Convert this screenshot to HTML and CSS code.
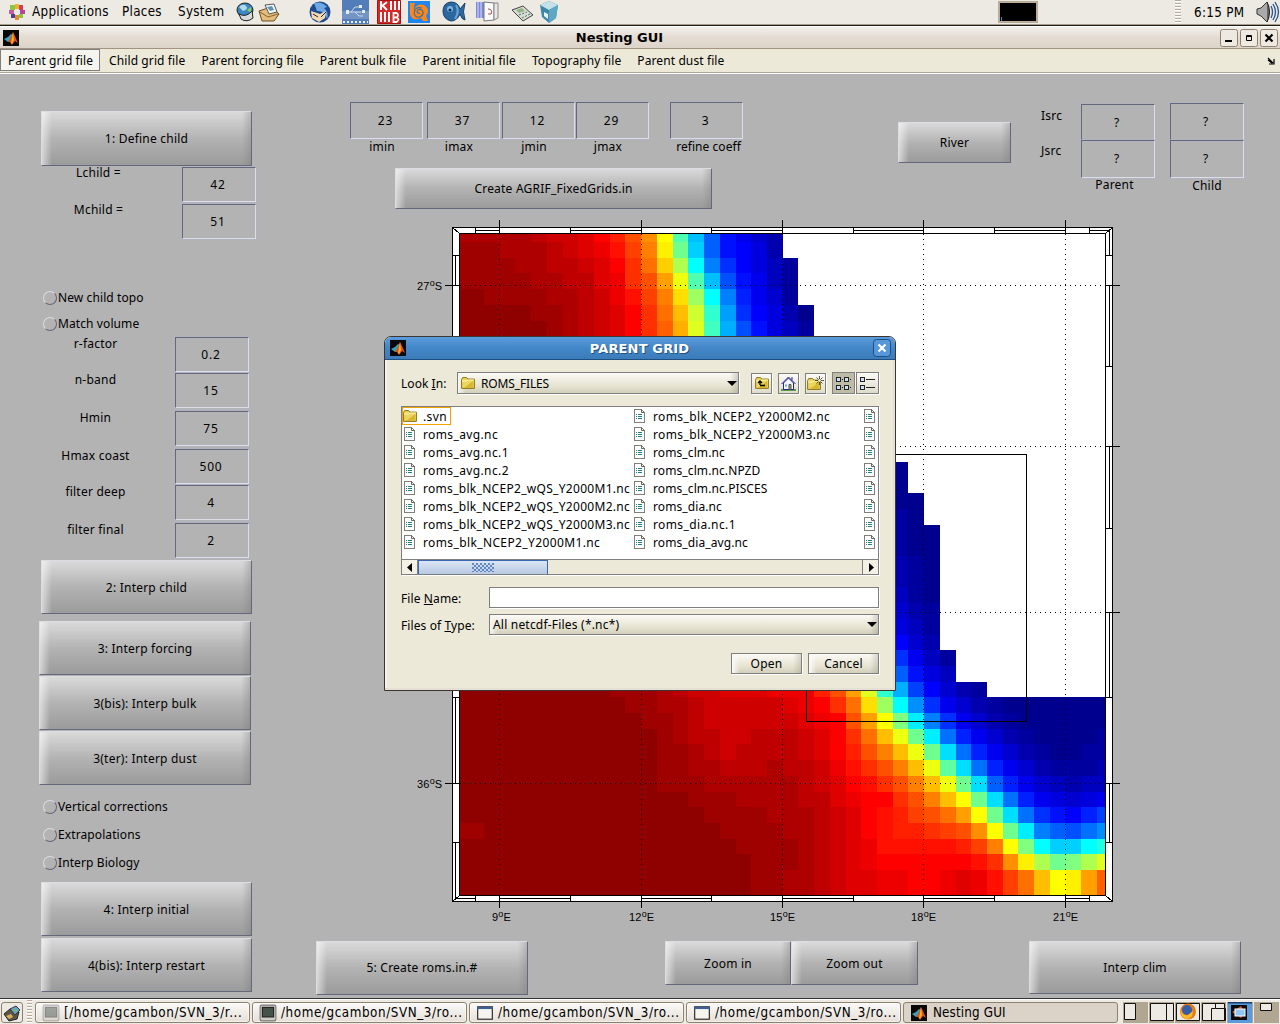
FILE: index.html
```html
<!DOCTYPE html>
<html lang="en">
<head>
<meta charset="utf-8">
<title>Nesting GUI</title>
<link rel="stylesheet" href="styles.css">
</head>
<body>
<svg width="0" height="0" class="defs">
  <defs>
    <symbol id="matlab" viewBox="0 0 16 16"><rect width="16" height="16" fill="#080808"/><path d="M1 9l4-2 3-3 2 1-3 6-2 1z" fill="#3f9fb5"/><path d="M5 12l3-5 2-5 2 4 3 7-3-2-3 4-2-3z" fill="#d9501c"/><path d="M8 13l2-11 1 8-2 4z" fill="#ffb020"/></symbol>
    <symbol id="file" viewBox="0 0 12 14"><g shape-rendering="crispEdges"><path d="M.5.5h7l3 3v10h-10z" fill="#fff" stroke="#808078"/><path d="M2 5.500h1M4 5.500h4M2 7.500h1M4 7.500h4M2 9.500h1M4 9.500h4" stroke="#267f80"/></g><path d="M7.500.5v3h3" fill="none" stroke="#665"/></symbol>
    <symbol id="folder" viewBox="0 0 14 12"><path d="M.6 2.500l1-1.900h4l1.300 1.500h6.500v9.300H.6z" fill="#ecd65e" stroke="#8a7318"/><path d="M1 4h5l1-1h6" stroke="#fff7b4" fill="none"/><path d="M3 11L12 4v7z" fill="#d8b832"/></symbol>
    <symbol id="term" viewBox="0 0 16 16"><rect x="1" y="1" width="14" height="14" rx="1.500" fill="#cfccc4" stroke="#777"/><rect x="3" y="3" width="10" height="8.500" fill="#45524a" stroke="#222"/></symbol>
    <symbol id="win" viewBox="0 0 16 16"><rect x="1.500" y="2.500" width="13" height="11" fill="#f6f4ef" stroke="#222"/><path d="M1 3.500h14" stroke="#3b5f96" stroke-width="2"/></symbol>
  </defs>
</svg>

<header class="panel">
  <svg class="foot" width="18" height="18" viewBox="0 0 18 18"><g stroke-width="4"><path d="M9 1v5" stroke="#e8b52c"/><path d="M9 12v5" stroke="#e38b2f"/><path d="M1 9h5" stroke="#c45aa4"/><path d="M12 9h5" stroke="#b4479b"/></g><g fill="#8cc63f"><path d="M2 2h5v5H2z"/><path d="M11 2h4v5h-4z" fill="#d73c5c"/><path d="M3 11h4v4H3z" fill="#4d3f8e"/><path d="M11 11h4v4h-4z"/></g></svg>
  <span class="m1">Applications</span><span class="m2">Places</span><span class="m3">System</span>
  <svg class="launchers" width="330" height="24" viewBox="0 0 330 24">
    <ellipse cx="10" cy="10" rx="8" ry="7" fill="#3c86c4" stroke="#222"/><path d="M4 7q4-4 7-1t-3 5z" fill="#b5d8f2"/><path d="M12 10l4-3v6z" fill="#8bd14e"/><path d="M4 14q7 4 13-3l1 7q-6 5-12 1z" fill="#d9d9dc" stroke="#222"/>
    <path d="M24 11l12-4 8 7-5 7H27z" fill="#e3bd7c" stroke="#6b4c1c"/><path d="M30 5l9-1 3 8-8 2z" fill="#f4f7f8" stroke="#555"/><path d="M32 7l5-1 2 4-4 1z" fill="#5c93b7"/><path d="M25 12l8 5 10-3" fill="none" stroke="#86632e"/>
    <circle cx="85" cy="12" r="10.500" fill="#1e4b8f"/><path d="M79 3q8-2 13 4l-3 1q5 4 3 11-3-9-10-8z" fill="#6fa8e4"/><path d="M76 11l9 3 6-3-1 7-6 4-7-4z" fill="#f2d9b1"/><path d="M78 14l5 3M91 12l-5 5" stroke="#27282c"/>
    <g transform="translate(107 0)"><path d="M0 0h27v24H0z" fill="#527db9"/><path d="M0 11h27v8H0z" fill="#7395c6"/><path d="M6 12h13M9 12l4-5h4M13 12l4 4h4" stroke="#c9d9ef" fill="none"/><path d="M4 10h3v4H4zM17 5h3v3h-3zM20 10h3v3h-3z" fill="#e3edf9"/><path d="M1 22h25" stroke="#eef4ff" stroke-width="2" stroke-dasharray="2 2"/></g>
    <g transform="translate(142 0)"><path d="M.5.5h23v23H.5z" fill="#d72727" stroke="#a11"/><path d="M4 1v9M5 6l5-4M5 5l5 5M4 12v10M8 12v10M12 12v10M14 1v9M18 1v9M22 1v9" stroke="#fff" stroke-width="2" fill="none"/><path d="M16.500 13h3q3 2 0 4.500 4 1.500 0 4.500h-3zM16.500 17.500h3" stroke="#fff" fill="none" stroke-width="1.800"/></g>
    <g transform="translate(173 1)"><path d="M0 0h22v22H0z" fill="#1f86ee"/><path d="M2 2h5q-2 5-1 7Q9 2 16 4q7 4 2 11l2 5h-5l-2-3Q4 21 2 13z" fill="#ff8617"/><path d="M14 7q-7-2-8 5 1 5 6 4 5-3 2-7-4-2-5 2 1 2 3 1" stroke="#3a6ea8" fill="none" stroke-width="1.200"/></g>
    <path d="M208 11q0-8 8-9 7 0 9 7l5-6q-3 9 0 17-3 0-5-6-3 7-9 7-8-2-8-10z" fill="#2c679f" stroke="#173f68"/><path d="M221 5q4 6-1 14" stroke="#6aa5d7" fill="none" stroke-width="2"/><circle cx="215" cy="9" r="3" fill="#79b9e5"/><circle cx="215" cy="10" r="1.500" fill="#102e58"/>
    <g transform="translate(241 1)"><path d="M0 1h9v16H0z" fill="#7b88d6"/><path d="M2 1v16M5 1v16" stroke="#dce0ff"/><path d="M8 1l10 1v17l-10 1z" fill="#fafafa" stroke="#777"/><path d="M18 2h4v15l-4 2z" fill="#e8e8ea" stroke="#888"/><path d="M12 8q5 0 3 5h-3" stroke="#b44" fill="none"/></g>
    <path d="M277 10l11-4 10 9-10 6z" fill="#d6ded3" stroke="#444"/><path d="M281 10l6-2 3 3-6 2z" fill="#92b487"/><path d="M284 15l8-3M287 18l8-4" stroke="#566" stroke-dasharray="2 1.500"/>
    <path d="M305 5l9-4 9 4-2 13-7 5-7-6z" fill="#3d86a6"/><path d="M305 5l9-4 9 4-9 5z" fill="#c4e1ea"/><path d="M314 10v13l7-5 2-13z" fill="#5ea8c3"/><path d="M309 12l4 2v5l-4-3z" fill="#e6f3f7"/>
  </svg>
  <div class="cpu"></div><div class="grip"></div><span class="clock">6:15 PM</span>
  <svg class="vol" width="24" height="24" viewBox="0 0 24 24"><path d="M1 9l4-1 6-6q4 10 0 20l-6-6-4-2z" fill="#aaa" stroke="#333"/><path d="M11 2q5 10 0 20" fill="#666" stroke="#222"/><path d="M15 6q3 6 0 12M17 4q5 8 0 16M19 2q7 10 0 20" fill="none" stroke="#285391" stroke-width="1.300"/></svg>
</header>

<div class="titlebar">
  <svg width="16" height="16"><use href="#matlab"/></svg>
  <h1>Nesting GUI</h1>
  <div class="wbtns">
    <svg width="18" height="18"><rect x=".5" y=".5" width="17" height="17" rx="2" class="wb"/><path d="M5 12h7" stroke="#000" stroke-width="2"/></svg>
    <svg width="18" height="18"><rect x=".5" y=".5" width="17" height="17" rx="2" class="wb"/><path d="M6.500 6.500h5v5h-5zM6 7.500h6" fill="none" stroke="#000"/></svg>
    <svg width="18" height="18"><rect x=".5" y=".5" width="17" height="17" rx="2" class="wb"/><path d="M5.500 5.500l7 7m0-7l-7 7" stroke="#000" stroke-width="2.200"/></svg>
  </div>
</div>
<nav class="menubar">
  <span class="on">Parent grid file</span><span>Child grid file</span><span>Parent forcing file</span><span>Parent bulk file</span><span>Parent initial file</span><span>Topography file</span><span>Parent dust file</span>
  <svg width="8" height="8"><path d="M1 1l5 5M7 2v5H2M1 3l4 3" stroke="#000" fill="none" stroke-width="1.200"/></svg>
</nav>

<main class="figure">
  <section class="steps">
    <button class="btn s1">1: Define child</button>
    <div class="pair dims">
      <label>Lchild =</label><span class="box">42</span>
      <label>Mchild =</label><span class="box">51</span>
    </div>
    <label class="radio ra"><i></i>New child topo</label>
    <label class="radio rb"><i></i>Match volume</label>
    <div class="pair topo">
      <label>r-factor</label><span class="box">0.2</span>
      <label>n-band</label><span class="box">15</span>
      <label>Hmin</label><span class="box">75</span>
      <label>Hmax coast</label><span class="box">500</span>
      <label>filter deep</label><span class="box">4</span>
      <label>filter final</label><span class="box">2</span>
    </div>
    <button class="btn s2">2: Interp child</button>
    <button class="btn s3">3: Interp forcing</button>
    <button class="btn s3b">3(bis): Interp bulk</button>
    <button class="btn s3b">3(ter): Interp dust</button>
    <label class="radio rc"><i></i>Vertical corrections</label>
    <label class="radio rd"><i></i>Extrapolations</label>
    <label class="radio rd"><i></i>Interp Biology</label>
    <button class="btn s4">4: Interp initial</button>
    <button class="btn s4b">4(bis): Interp restart</button>
  </section>

  <section class="work">
    <div class="top">
      <div class="params">
        <div class="fields">
          <div class="f"><span class="box">23</span><label>imin</label></div>
          <div class="f f2"><span class="box">37</span><label>imax</label></div>
          <div class="f f3"><span class="box">12</span><label>jmin</label></div>
          <div class="f f4"><span class="box">29</span><label>jmax</label></div>
          <div class="f f5"><span class="box">3</span><label>refine coeff</label></div>
        </div>
        <button class="btn agrif">Create AGRIF_FixedGrids.in</button>
      </div>
      <button class="btn river">River</button>
      <div class="srclab"><label>Isrc</label><label>Jsrc</label></div>
      <div class="src sp"><span class="box">?</span><span class="box">?</span><label>Parent</label></div>
      <div class="src sc"><span class="box">?</span><span class="box">?</span><label>Child</label></div>
    </div>
    <svg class="plot" width="720" height="712" viewBox="410 216 720 712" shape-rendering="crispEdges">
      <rect x="452" y="227" width="660" height="674" fill="#fff"/>
      <g id="cells"></g>
      <g stroke="#000" stroke-dasharray="1 4" fill="none">
        <path d="M499.500 234v661M641.500 234v661M782.500 234v661M923.500 234v661M1065.500 234v661"/>
        <path d="M460 285.500h645M460 446.500h645M460 612.500h645M460 783.500h645"/>
      </g>
      <g stroke="#000" fill="none">
        <path d="M452.500 227.500h660v673.500h-660zM459.500 233.500h646v662h-646z"/>
        <path d="M806.500 454.500h220v267h-220z"/>
        <path d="M452.500 227.500l7 6M1112.500 227.500l-7 6M452.500 901.500l7-6M1112.500 901.500l-7-6"/>
        <path d="M475.500 230.500h24M570.500 230.500h71M711.500 230.500h71M853.500 230.500h70M994.500 230.500h71M1089.500 230.500h20M455.500 898.500h20M499.500 898.500h71M641.500 898.500h70M782.500 898.500h71M923.500 898.500h71M1065.500 898.500h24"/>
        <path d="M475.500 228v6M570.500 228v6M711.500 228v6M853.500 228v6M994.500 228v6M1089.500 228v6M475.500 895v6M570.500 895v6M711.500 895v6M853.500 895v6M994.500 895v6M1089.500 895v6"/>
        <path d="M455.500 255.500v30M455.500 697.500v86M455.500 842.500v56M1109.500 230.500v25M1109.500 285.500v81M1109.500 446.500v82M1109.500 612.500v85M1109.500 783.500v59"/>
        <path d="M453 255.500h7M453 697.500h7M453 842.500h7M1105 255.500h7M1105 366.500h7M1105 528.500h7M1105 697.500h7M1105 842.500h7"/>
        <path d="M499.500 220v14M641.500 220v14M782.500 220v14M923.500 220v14M1065.500 220v14M499.500 895v13M641.500 895v13M782.500 895v13M923.500 895v13M1065.500 895v13M445 285.500h15M445 783.500h15M1105 285.500h15M1105 446.500h15M1105 612.500h15M1105 783.500h15"/>
      </g>
      <g class="ax">
        <text x="417" y="290">27<tspan dy="-4" class="deg">o</tspan><tspan dy="4">S</tspan></text>
        <text x="417" y="788">36<tspan dy="-4" class="deg">o</tspan><tspan dy="4">S</tspan></text>
        <text x="492" y="921">9<tspan dy="-4" class="deg">o</tspan><tspan dy="4">E</tspan></text>
        <text x="629" y="921">12<tspan dy="-4" class="deg">o</tspan><tspan dy="4">E</tspan></text>
        <text x="770" y="921">15<tspan dy="-4" class="deg">o</tspan><tspan dy="4">E</tspan></text>
        <text x="911" y="921">18<tspan dy="-4" class="deg">o</tspan><tspan dy="4">E</tspan></text>
        <text x="1053" y="921">21<tspan dy="-4" class="deg">o</tspan><tspan dy="4">E</tspan></text>
      </g>
    </svg>
    <div class="bottom">
      <button class="btn create">5: Create roms.in.#</button>
      <button class="btn zi">Zoom in</button><button class="btn zo">Zoom out</button>
      <button class="btn clim">Interp clim</button>
    </div>
  </section>
</main>

<footer class="taskbar">
  <div class="desk"><svg width="18" height="18" viewBox="0 0 18 18"><path d="M1 10l6-5 9 3-2 7-8 2z" fill="#5c5647" stroke="#222"/><path d="M7 5l6-3 4 4-5 5z" fill="#6f9fc7" stroke="#333"/><path d="M3 12l5-2 2 3-4 2z" fill="#d6b45a"/><path d="M10 6l3-1 1 3z" fill="#78bf52"/></svg></div>
  <div class="grip g2"></div>
  <div class="task"><svg width="18" height="18" opacity=".5"><use href="#term"/></svg><span>[/home/gcambon/SVN_3/r...</span></div>
  <div class="task"><svg width="18" height="18"><use href="#term"/></svg><span>/home/gcambon/SVN_3/ro...</span></div>
  <div class="task"><svg width="18" height="18"><use href="#win"/></svg><span>/home/gcambon/SVN_3/ro...</span></div>
  <div class="task"><svg width="18" height="18"><use href="#win"/></svg><span>/home/gcambon/SVN_3/ro...</span></div>
  <div class="task active"><svg width="16" height="16"><use href="#matlab"/></svg><span>Nesting GUI</span></div>
  <svg class="pager" width="156" height="21" viewBox="0 0 156 21">
    <rect width="156" height="21" fill="#b0a692"/><g fill="#edeae3" stroke="#111"><path d="M1.500 1.500h11v16h-11zM27.500 1.500h23v17h-23zM43.500 1.500v17M53.500 1.500h23v17h-23zM79.500 1.500h22v17h-22zM92.500 1.500v5h10v12h-14v-12h4M137.500 1.500h11v7h-11z"/></g>
    <path d="M25.500 0v21M51.500 0v21M77.500 0v21M103.500 0v21M130.500 0v21" stroke="#edeae3"/>
    <circle cx="65" cy="9.500" r="8" fill="#e67a16"/><circle cx="64" cy="8" r="5" fill="#355ea7"/><path d="M58 7q1 7 7 6l5-4q0 8-7 8-6-2-5-10z" fill="#f6b92a"/>
    <rect x="105" width="24" height="21" fill="#5b99d8"/><path d="M105 .5h24" stroke="#183b74" stroke-width="2"/><rect x="108" y="3" width="16" height="15" fill="#0a0a0a"/><path d="M109 10l9-6 4 7-4 5z" fill="#c5532d"/><rect x="112" y="7" width="10" height="7" fill="#8fc5ee" stroke="#fff"/>
  </svg>
</footer>

<div class="dialog">
  <div class="dtitle"><svg width="16" height="16"><use href="#matlab"/></svg><h2>PARENT GRID</h2><svg width="18" height="18"><rect x=".5" y=".5" width="17" height="17" rx="3" fill="#5597d8" stroke="#1d4f83"/><path d="M5.500 5.500l7 7m0-7l-7 7" stroke="#fff" stroke-width="2.200"/></svg></div>
  <div class="dbody">
    <div class="look">
      <label>Look <u>I</u>n:</label>
      <div class="combo"><svg width="14" height="12"><use href="#folder"/></svg><span>ROMS_FILES</span><i></i></div>
      <div class="tool t1"><svg width="14" height="13" viewBox="0 0 14 13"><use href="#folder" width="14" height="12"/><path d="M5 8V4M3 6l2-2 2 2M5 8.500h5" stroke="#000" fill="none" stroke-width="1.300"/></svg></div>
      <div class="tool t2"><svg width="15" height="15" viewBox="0 0 15 15"><path d="M0 14h15" stroke="#5a9c43" stroke-width="2"/><path d="M2.500 7v6.500h10V7l-5-5z" fill="#f4f4ff" stroke="#24248c"/><path d="M.5 8l7-7 7 7M11 4V1" fill="none" stroke="#24248c"/><path d="M8 8.500h2v5H8z" fill="#b3a43a" stroke="#555"/><path d="M4 8.500h2v2H4z" fill="#5bb4d8"/></svg></div>
      <div class="tool t2"><svg width="17" height="15" viewBox="0 0 17 15"><use href="#folder" y="2" width="14" height="12"/><path d="M12.500 0v9M8 4.500h9M9.500 1.500l6 6m0-6l-6 6" stroke="#332" stroke-width=".8"/><circle cx="12.500" cy="4.500" r="1.300" fill="#ffe"/></svg></div>
      <div class="tool tog sel"><svg width="17" height="15" viewBox="0 0 17 15"><g fill="#cfe0f5" stroke="#222" shape-rendering="crispEdges"><path d="M1.500 1.500h4v4h-4zM9.500 1.500h4v4h-4zM1.500 9.500h4v4h-4zM9.500 9.500h4v4h-4zM7 3.500h1M15 3.500h1M7 11.500h1M15 11.500h1"/></g></svg></div>
      <div class="tool tog"><svg width="17" height="15" viewBox="0 0 17 15"><g fill="#cfe0f5" stroke="#222" shape-rendering="crispEdges"><path d="M1.500 1.500h4v4h-4zM1.500 9.500h4v4h-4zM7 3.500h9M7 11.500h9"/></g></svg></div>
    </div>
    <div class="list">
      <div class="cols">
        <ul>
          <li class="cur"><svg width="14" height="12"><use href="#folder"/></svg><span>.svn</span></li>
          <li><svg width="12" height="14"><use href="#file"/></svg><span>roms_avg.nc</span></li>
          <li><svg width="12" height="14"><use href="#file"/></svg><span>roms_avg.nc.1</span></li>
          <li><svg width="12" height="14"><use href="#file"/></svg><span>roms_avg.nc.2</span></li>
          <li class="long"><svg width="12" height="14"><use href="#file"/></svg><span>roms_blk_NCEP2_wQS_Y2000M1.nc</span></li>
          <li class="long"><svg width="12" height="14"><use href="#file"/></svg><span>roms_blk_NCEP2_wQS_Y2000M2.nc</span></li>
          <li class="long"><svg width="12" height="14"><use href="#file"/></svg><span>roms_blk_NCEP2_wQS_Y2000M3.nc</span></li>
          <li><svg width="12" height="14"><use href="#file"/></svg><span>roms_blk_NCEP2_Y2000M1.nc</span></li>
        </ul>
        <ul>
          <li><svg width="12" height="14"><use href="#file"/></svg><span>roms_blk_NCEP2_Y2000M2.nc</span></li>
          <li><svg width="12" height="14"><use href="#file"/></svg><span>roms_blk_NCEP2_Y2000M3.nc</span></li>
          <li class="tight"><svg width="12" height="14"><use href="#file"/></svg><span>roms_clm.nc</span></li>
          <li class="tight"><svg width="12" height="14"><use href="#file"/></svg><span>roms_clm.nc.NPZD</span></li>
          <li class="tight"><svg width="12" height="14"><use href="#file"/></svg><span>roms_clm.nc.PISCES</span></li>
          <li class="tight"><svg width="12" height="14"><use href="#file"/></svg><span>roms_dia.nc</span></li>
          <li><svg width="12" height="14"><use href="#file"/></svg><span>roms_dia.nc.1</span></li>
          <li class="tight"><svg width="12" height="14"><use href="#file"/></svg><span>roms_dia_avg.nc</span></li>
        </ul>
        <ul class="last">
          <li><svg width="12" height="14"><use href="#file"/></svg></li><li><svg width="12" height="14"><use href="#file"/></svg></li><li><svg width="12" height="14"><use href="#file"/></svg></li><li><svg width="12" height="14"><use href="#file"/></svg></li><li><svg width="12" height="14"><use href="#file"/></svg></li><li><svg width="12" height="14"><use href="#file"/></svg></li><li><svg width="12" height="14"><use href="#file"/></svg></li><li><svg width="12" height="14"><use href="#file"/></svg></li>
        </ul>
      </div>
      <div class="sbar"><div class="arr"><svg width="6" height="9"><path d="M5 0v9L0 4.500z"/></svg></div><div class="thumb"><i></i></div><div class="arr end"><svg width="6" height="9"><path d="M1 0v9l5-4.500z"/></svg></div></div>
    </div>
    <div class="row r1"><label>File <u>N</u>ame:</label><div class="input"></div></div>
    <div class="row r2"><label>Files of <u>T</u>ype:</label><div class="combo"><span>All netcdf-Files (*.nc*)</span><i></i></div></div>
    <div class="acts"><button>Open</button><button>Cancel</button></div>
  </div>
</div>
<script src="bathy.js"></script>
</body>
</html>
```
FILE: bathy.js
```js
// Run-length rows of the 64-level jet colour map; 0 = land.
var rows = {
  0: "61x4 60 59x2 58 56 54 51 47 40 29 20 14 9 7 5 3",
  1: "62x2 61x3 60 59 58 57 55 52 48 41 31 21 14 9 8 6 3",
  2: "62x3 61x2 60x2 59 58 56 53 49 43 35 24 16 11 8 6 4 2",
  3: "62x4 61x2 60x2 58 57 53 51 46 39 29 20 13 9 7 4 2",
  4: "63 62x4 61x2 60 59 57 55 52 48 42 34 24 16 10 7 5 2",
  5: "63x4 62x2 61 60 59 58 56 53 49 44 37 27 18 11 8 6 3 1",
  6: "63x5 62 61 60 59 58 56 53 50 45 38 28 19 13 9 6 4 2",
  15: "0x27 1", 16: "0x27 1", 17: "0x27 1x2", 18: "0x27 2 1",
  19: "0x27 2 1x2", 20: "0x27 2 1x2", 21: "0x27 3 2 1", 22: "0x27 3 2 1",
  23: "0x27 4 2 1", 24: "0x27 5 3 2", 25: "0x27 6 4 2", 26: "0x27 8 5 3",
  27: "0x27 11 7 4 2", 28: "0x27 14 9 6 4",
  29: "63x9 62x3 61 60 59x2 58x3 57x3 54 51 46 38 27 19 12 8 5 3 2",
  30: "63x10 62x2 61x2 60 59x5 58 57 56 53 49 42 34 24 17 11 7 5 3 2 1x7",
  31: "63x11 62x2 61 60 59x6 58 57 56 51 46 40 32 23 16 11 7 5 3 2 1x6",
  32: "63x12 62 61 60x2 59x2 60x3 59 58 56 53 49 44 39 31 23 15 10 7 5 3 2 1x4 2",
  33: "63x12 62x2 61 60 59 60x4 59 58 56 54 51 48 44 39 31 22 15 10 7 5 3 2 1x2 2x2",
  34: "63x12 62x2 61x2 60x3 61 60x2 59 57 55 53 51 48 44 39 30 22 15 10 7 5 3 2x3 3",
  35: "63x12 62x3 61x6 60 59 58 56 55 53 51 48 44 39 31 22 14 10 7 5 4 3 4 4",
  36: "63x14 62x3 61x4 60x2 58 57 56x2 53 51 48 44 40 31 22 15 10 7 6 5 6 7",
  37: "63x15 62x4 61x3 60 59 58 56 55 54 52 51 49 46 40 31 22 15 11 9 8 10 12",
  38: "62 63x15 62x4 61x2 60 59 58 56 55 54x2 53 52 51 47 40 31 23 16 14 13 15 17",
  39: "63x17 62x4 61 60 59 58 57 55x5 54 52 48 40 32 24 21x2 24 26",
  40: "63x18 62x3 61 60 59 58 57 56x6 55 53 47 41 35 31 32 35 38",
  41: "63x18 62x2 61x2 60 59 58x2 57x2 56x2 57 58 57 55 52 49 44 40 41 46 50"
};

function jet(i) {
  function c(v) { return Math.round(255 * Math.max(0, Math.min(1, v))); }
  var r = i <= 40 ? (i - 24) / 16 : (72 - i) / 16;
  var g = i <= 32 ? (i - 8) / 16 : (56 - i) / 16;
  var b = i <= 24 ? (i + 8) / 16 : (40 - i) / 16;
  return "rgb(" + c(r) + "," + c(g) + "," + c(b) + ")";
}
function colX(k) { return k === 0 ? 460 : k === 41 ? 1105 : Math.round(484 + 15.72 * (k - 1)); }
function rowY(k) { return k === 0 ? 234 : k === 42 ? 895 : Math.round(242 + 15.7 * (k - 1)); }

var group = document.getElementById("cells");
Object.keys(rows).forEach(function (key) {
  var r = +key, col = 0;
  rows[key].split(" ").forEach(function (run) {
    var p = run.split("x"), n = +(p[1] || 1);
    if (+p[0]) {
      var e = document.createElementNS("http://www.w3.org/2000/svg", "rect");
      e.setAttribute("x", colX(col));
      e.setAttribute("y", rowY(r));
      e.setAttribute("width", colX(col + n) - colX(col));
      e.setAttribute("height", rowY(r + 1) - rowY(r));
      e.setAttribute("fill", jet(+p[0]));
      group.appendChild(e);
    }
    col += n;
  });
});
```
FILE: styles.css
```css
* { box-sizing: border-box; }
body { margin: 0; width: 1280px; height: 1024px; overflow: hidden; position: relative; background: #b3b3b3; color: #000; font: 12px/16px "Noto Sans", "Open Sans", sans-serif; letter-spacing: .22px; }
.defs { position: absolute; }
svg { display: block; flex: none; }
h1, h2, ul { margin: 0; padding: 0; }
button { font: inherit; letter-spacing: inherit; color: inherit; margin: 0; padding: 0; border-radius: 0; }

.panel, .taskbar { font: 13.300px/24px "DejaVu Sans Condensed", "DejaVu Sans", sans-serif; font-stretch: condensed; letter-spacing: .3px; }
.panel { display: flex; height: 26px; background: #edeae3; border-bottom: 1px solid #1a1a1a; box-shadow: inset 0 -1px #a89d87; }
.foot { margin: 3px 0 0 8px; }
.m1 { margin-left: 6px; width: 90px; }
.m2 { width: 56px; }
.m3 { width: 57px; }
.cpu { margin: 1px 0 0 433px; width: 40px; height: 22px; background: linear-gradient(#1793d8, #1793d8) 1px 14px / 1px 4px no-repeat #000; border: 2px solid #b8ab98; flex: none; }
.grip { width: 6px; height: 24px; margin-left: 137px; background: repeating-linear-gradient(#b8ab98 0 1px, #fff 1px 2px, #edeae3 2px 3px); flex: none; }
.clock { margin-left: 13px; width: 62px; white-space: nowrap; line-height: 26px; }

.titlebar { display: flex; align-items: center; height: 23px; padding: 0 3px; background: linear-gradient(#f2efea, #e4dcd3 50%, #ddd3c9); border-top: 1px solid #fff; border-bottom: 1px solid #a39380; }
.titlebar h1 { flex: 1; text-align: center; font: bold 13px/20px "DejaVu Sans", sans-serif; letter-spacing: 0; }
.wbtns { display: flex; gap: 2px; margin-right: -1px; }
.wb { fill: #eee9e1; stroke: #8f8270; }

.menubar { display: flex; height: 25px; background: #ece9d8; border-bottom: 1px solid #fff; box-shadow: inset 0 -1px #aca899; letter-spacing: .11px; }
.menubar span { height: 22px; line-height: 22px; padding: 0 7px; border: 1px solid transparent; white-space: nowrap; }
.menubar .on { border-color: #7f7f7f; background: #f5f4ee; width: 100px; margin-right: 1px; }
.menubar svg { margin: 8px 5px 0 auto; }

.figure { display: flex; height: 924px; }
.btn { display: block; border: 1px solid; border-color: #dcdde3 #65677a #65677a #dcdde3; background: linear-gradient(90deg, rgba(255,255,255,.55), rgba(255,255,255,0) 10px calc(100% - 9px), rgba(120,120,120,.35)), linear-gradient(#dadada, #b3b3b3 50%, #9b9b9b); text-align: center; padding-top: 2px; }
.box { display: block; border: 1px solid; border-color: #65677a #dcdde8 #dcdde8 #65677a; box-shadow: 0 0 0 1px rgba(175,180,205,.45); text-align: center; letter-spacing: .8px; padding-right: 2px; }

.steps { width: 300px; padding-left: 41px; flex: none; }
.steps .btn { width: 211px; height: 54px; }
.steps .s1 { margin-top: 37px; height: 55px; padding-top: 0; }
.pair { display: grid; }
.pair label { text-align: center; }
.dims { grid-template-columns: 115px 74px; column-gap: 26px; grid-auto-rows: 37px; margin-top: 1px; }
.dims .box { height: 35px; line-height: 33px; }
.dims label { line-height: 12px; }
.radio { display: flex; align-items: center; height: 16px; margin-left: 2px; letter-spacing: .1px; }
.radio i { width: 14px; height: 14px; border: 1px solid; border-color: #dcdde3 #65677a #65677a #dcdde3; border-radius: 50%; margin-right: 1px; flex: none; }
.ra { margin-top: 49px; }
.rb { margin-top: 10px; }
.topo { grid-template-columns: 109px 74px; column-gap: 25px; grid-template-rows: 36px 38px 38px 36px 38px 35px; margin-top: 5px; height: 223px; }
.topo .box { height: 35px; line-height: 33px; }
.topo label { line-height: 14px; }
.steps .s3, .steps .s3b { width: 212px; margin-left: -2px; }
.steps .s3 { margin-top: 7px; }
.steps .s3b { margin-top: 1px; }
.rc { margin-top: 14px; }
.rd { margin-top: 12px; }
.steps .s4 { margin-top: 11px; }
.steps .s4b { margin-top: 2px; }

.work { width: 980px; flex: none; }
.top { display: flex; height: 142px; padding-left: 50px; }
.params { width: 548px; padding-top: 28px; }
.fields { display: flex; height: 66px; }
.f { width: 73px; text-align: center; white-space: nowrap; }
.f .box, .src .box { height: 37px; line-height: 35px; }
.f label { display: block; margin-right: 9px; }
.f2 { margin-left: 4px; }
.f3 { margin-left: 2px; }
.f4 { margin-left: 1px; }
.f5 { margin-left: 21px; }
.f5 label { margin: 0 -6px 0 -2px; letter-spacing: .05px; }
.agrif { width: 317px; height: 41px; margin-left: 45px; padding-top: 0; }
.river { width: 113px; height: 41px; margin-top: 48px; padding-top: 0; }
.srclab { width: 70px; padding: 34px 0 0 30px; }
.srclab label { display: block; height: 35px; }
.src { width: 74px; padding-top: 30px; text-align: center; }
.src .box + .box { height: 38px; margin-top: -1px; }
.src label { display: block; margin: -1px 7px 0 0; }
.sc { margin-left: 15px; padding-top: 29px; }
.sc .box:first-child { height: 38px; }
.sc label { margin: 0; }
.plot { margin-left: 110px; }
.ax { font: 11px "Liberation Sans", sans-serif; letter-spacing: .2px; }
.deg { font-size: 9px; }
.bottom { display: flex; margin-top: 13px; padding-left: 16px; }
.create { width: 212px; height: 54px; margin-right: 137px; padding-top: 0; }
.zi { width: 126px; height: 44px; }
.zo { width: 127px; height: 44px; margin-right: 111px; }
.clim { width: 212px; height: 53px; padding-top: 0; }

.taskbar { display: flex; height: 26px; border-top: 1px solid #333; box-shadow: inset 0 1px #fff; background: #edeae3; padding: 3px 0 0 1px; line-height: 20px; letter-spacing: .58px; }
.desk { width: 22px; height: 21px; border: 1px solid #8d8270; border-radius: 3px; padding: 1px; flex: none; }
.taskbar .g2 { margin: -2px 3px 0 4px; width: 5px; }
.task { display: flex; align-items: center; width: 215px; height: 21px; border: 1px solid #8d8270; border-radius: 3px; padding: 0 0 0 6px; margin-right: 2px; background: linear-gradient(#fbfaf8, #e5dfd7); white-space: nowrap; flex: none; box-shadow: inset 0 0 0 1px rgba(255,255,255,.5); }
.task svg { margin-right: 4px; }
.task.active { background: #dcd3c8; padding: 1px 0 0 7px; margin-right: 5px; box-shadow: none; letter-spacing: .15px; }
.active svg { margin-right: 6px; }

.dialog { position: absolute; left: 384px; top: 336px; width: 512px; height: 355px; border: 1px solid #3c3632; border-radius: 7px 7px 0 0; background: #ece9d8; box-shadow: inset -2px -2px #e5dfd4, inset 2px 0 #f6f4ec; }
.dtitle { display: flex; align-items: center; height: 23px; padding: 0 4px 0 5px; background: linear-gradient(#5b9bdb, #4387c8 50%, #3b7bb9); border-bottom: 1px solid #1d4f83; border-radius: 6px 6px 0 0; }
.dtitle h2 { flex: 1; text-align: center; font: bold 13px/23px "DejaVu Sans", sans-serif; color: #fff; letter-spacing: .15px; text-shadow: 1px 1px #244f7d; padding-top: 1px; }
.dbody { padding: 12px 16px 0; }
.look { display: flex; height: 22px; align-items: center; }
.look label { width: 56px; padding-top: 1px; letter-spacing: .05px; }
.combo { display: flex; align-items: center; height: 22px; border: 1px solid #7f7f7f; background: linear-gradient(90deg, #f6f5ee 0, transparent 8px calc(100% - 8px), rgba(150,150,130,.4)), linear-gradient(#fbfaf6, #e6e3d1 65%, #d2cfbd); box-shadow: 1px 1px #fff; padding: 0 3px; }
.look .combo { width: 282px; margin-right: 12px; }
.look .combo span { margin: 1px 0 0 6px; letter-spacing: -.15px; }
.combo i { margin: 0 -2px 0 auto; border: 5px solid transparent; border-top-color: #000; border-bottom: 0; }
.tool { display: flex; align-items: center; justify-content: center; width: 21px; height: 21px; border: 1px solid #7f7f7f; background: linear-gradient(#fbfaf6, #dfdccb); box-shadow: 1px 1px #fff; flex: none; }
.t2 { margin-left: 6px; }
.tog { width: 23px; height: 22px; margin-left: 1px; }
.sel { background: #bebba8; margin-left: 6px; }
.list { margin-top: 12px; height: 169px; border: 1px solid #7f7f7f; background: #fff; box-shadow: 1px 1px #fff; }
.cols { display: flex; height: 152px; overflow: hidden; }
ul { list-style: none; width: 230px; flex: none; }
.last { width: 16px; }
li { display: flex; align-items: center; height: 18px; padding-left: 2px; white-space: nowrap; letter-spacing: .38px; }
li span { margin: 2px 0 0 7px; }
.long { letter-spacing: .3px; }
.tight { letter-spacing: .1px; }
.cur { width: 49px; padding-left: 0; border: 1px solid #f5a100; }
.cur span { margin-left: 6px; }
.sbar { display: flex; height: 15px; background: #ece9d8; border-top: 1px solid #7f7f7f; }
.arr { display: flex; align-items: center; justify-content: center; width: 16px; background: #f3f1e6; border-right: 1px solid #7f7f7f; }
.end { margin-left: auto; border: 0; border-left: 1px solid #7f7f7f; }
.thumb { display: flex; align-items: center; justify-content: center; width: 130px; border: 1px solid #3b68b2; border-width: 1px 1px 0; background: linear-gradient(#dbe5f3, #b7c9e3); }
.thumb i { width: 22px; height: 9px; background: radial-gradient(circle at 1px 1px, #5a82c0 .7px, transparent .8px) 0 0 / 4px 4px, radial-gradient(circle at 3px 3px, #5a82c0 .7px, transparent .8px) 0 0 / 4px 4px; }
.row { display: flex; align-items: center; height: 21px; }
.row label { width: 88px; padding-top: 2px; letter-spacing: .1px; }
.row .combo, .input { flex: 1; height: 21px; }
.row .combo span { letter-spacing: .2px; }
.input { background: #fff; border: 1px solid #7f7f7f; box-shadow: 1px 1px #fff; }
.r1 { margin-top: 12px; }
.r2 { margin-top: 6px; }
.acts { display: flex; justify-content: flex-end; gap: 6px; margin-top: 18px; }
.acts button { width: 71px; height: 21px; line-height: 20px; border: 1px solid #7f7f7f; background: linear-gradient(90deg, #fbfaf6 0, transparent 8px calc(100% - 8px), rgba(150,150,130,.35)), linear-gradient(#fbfaf6, #e6e3d1 65%, #d2cfbd); box-shadow: 1px 1px #fff; }
```
